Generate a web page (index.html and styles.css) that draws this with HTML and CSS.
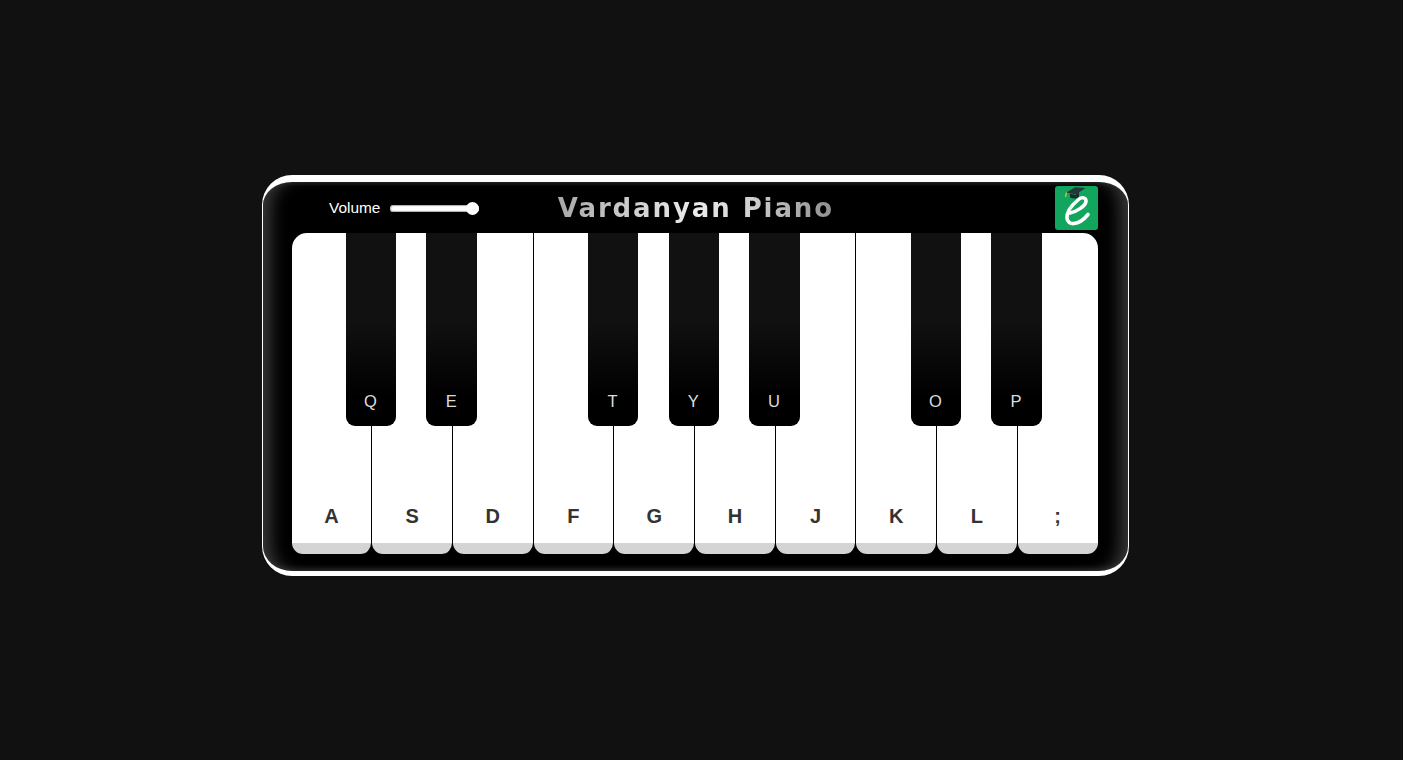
FILE: index.html
```html
<!DOCTYPE html>
<html lang="en">
<head>
<meta charset="utf-8">
<title>Vardanyan Piano</title>
<link rel="stylesheet" href="styles.css">
</head>
<body>
<main class="piano">
  <header class="topbar">
    <label class="volume"><span>Volume</span><input class="slider" type="range" min="0" max="100" value="100"></label>
    <h1 class="title">Vardanyan Piano</h1>
    <svg class="logo" viewBox="0 0 43 44" aria-label="logo">
      <rect width="43" height="44" rx="3" fill="#12a55d"/>
      <path d="M11.500 6.500 20 1.200 30.500 2 21 8.500Z" fill="#24383a"/>
      <path d="M15 7.500v4c3 1.500 6.500 1.500 9 -.5V6L20.500 9Z" fill="#1a2c2c"/>
      <path d="M11.500 6.500 10.500 11" stroke="#c2d040" stroke-width="1.200" fill="none"/>
      <path d="M15 27C22 25.500 30.500 20 31 15.500 31.200 11.500 27 10.500 23.500 13.500 17.500 18.500 11.500 26 12 32 12.500 39.500 23 40.500 33 28.500" stroke="#fff" stroke-width="3.600" stroke-linecap="round" fill="none"/>
    </svg>
  </header>
  <section class="keys">
    <div class="white"><span>A</span><div class="black"><span>Q</span></div></div>
    <div class="white"><span>S</span><div class="black"><span>E</span></div></div>
    <div class="white"><span>D</span></div>
    <div class="white"><span>F</span><div class="black"><span>T</span></div></div>
    <div class="white"><span>G</span><div class="black"><span>Y</span></div></div>
    <div class="white"><span>H</span><div class="black"><span>U</span></div></div>
    <div class="white"><span>J</span></div>
    <div class="white"><span>K</span><div class="black"><span>O</span></div></div>
    <div class="white"><span>L</span><div class="black"><span>P</span></div></div>
    <div class="white"><span>;</span></div>
  </section>
</main>
</body>
</html>
```
FILE: styles.css
```css
* { box-sizing: border-box; }
html, body { height: 100%; }
body {
  margin: 0;
  background: #111;
  display: flex;
  justify-content: center;
  padding-top: 175px;
  font-family: "Liberation Sans", Arial, sans-serif;
}
.piano {
  width: 867px;
  height: 401px;
  margin-left: -12px;
  background: #000;
  border-style: solid;
  border-color: #fff;
  border-width: 7px 1.500px 5px 1.500px;
  border-radius: 30px;
  box-shadow:
    inset 16px 0 16px -8px #383838,
    inset -16px 0 16px -8px #383838,
    inset 0 -6px 6px -5px #333,
    inset 0 4px 4px -3px #222;
  padding: 0 30.500px 0 28.500px;
}
.topbar {
  height: 51px;
  display: flex;
  align-items: center;
  position: relative;
}
.volume {
  display: flex;
  align-items: center;
  gap: 9.500px;
  margin-left: 37.500px;
  color: #fff;
  font-size: 15.400px;
}
.slider {
  -webkit-appearance: none;
  appearance: none;
  width: 89.500px;
  height: 7px;
  margin: 1px 0 0;
  border-radius: 4px;
  background: #fff;
  box-shadow: inset 0 0 1px 1px #aaa;
  outline: none;
}
.slider::-webkit-slider-thumb {
  -webkit-appearance: none;
  width: 13px;
  height: 13px;
  border-radius: 50%;
  background: #fff;
}
.title {
  margin: 1px 0 0 78.500px;
  font-family: "DejaVu Sans", Verdana, sans-serif;
  font-size: 26px;
  font-weight: 700;
  letter-spacing: 1.900px;
  white-space: nowrap;
  background: linear-gradient(90deg, #a8a8a8 0%, #d0d0d0 28%, #ececec 50%, #cfcfcf 70%, #8e8e8e 100%);
  -webkit-background-clip: text;
  background-clip: text;
  color: transparent;
}
.logo {
  width: 43px;
  height: 44px;
  margin-left: auto;
  margin-top: 1px;
  flex: none;
}
.keys {
  display: flex;
  height: 321px;
}
.white {
  position: relative;
  flex: 1 1 0;
  background: linear-gradient(180deg, #fff 0, #fff 310px, #d4d4d4 310px);
  border-right: 1px solid #000;
  border-radius: 0 0 11px 11px;
  display: flex;
  justify-content: center;
  align-items: flex-end;
  padding-bottom: 26px;
  color: #333;
  font-size: 20px;
  font-weight: 700;
}
.white:first-child { border-top-left-radius: 15px; }
.white:last-child { border-top-right-radius: 15px; border-right: 0; }
.black {
  position: absolute;
  top: 0;
  right: -25px;
  width: 50.500px;
  height: 193px;
  z-index: 1;
  display: flex;
  justify-content: center;
  align-items: flex-end;
  padding: 0 1px 15px 0;
  border-radius: 0 0 9px 9px;
  background: linear-gradient(180deg, #111 0%, #111 45%, #000 85%);
  color: #ddd;
  font-size: 16.500px;
  font-weight: 400;
}
```
